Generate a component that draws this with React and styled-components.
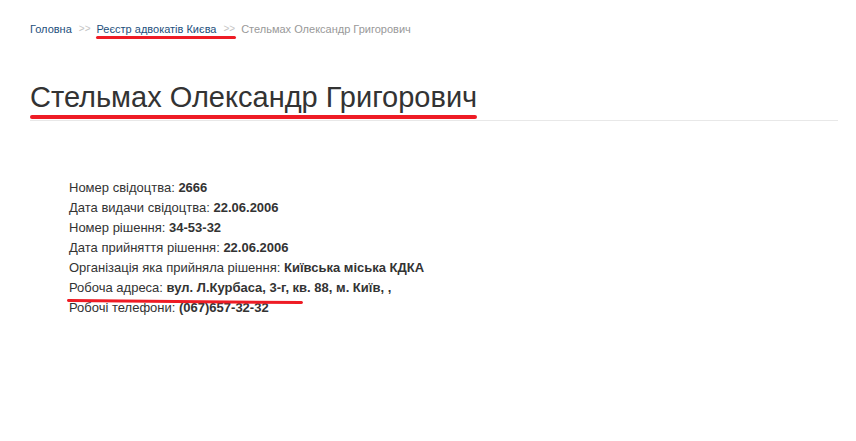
import React from "react";
import styled, { createGlobalStyle } from "styled-components";

const Global = createGlobalStyle`
  html, body { margin: 0; padding: 0; background: #fff; }
  body { font-family: "Liberation Sans", Arial, sans-serif; color: #333; }
`;

const Page = styled.div`
  padding: 22px 18px 0 30px;
`;

const Crumbs = styled.nav`
  display: flex;
  align-items: center;
  font-size: 11px;
  line-height: 14px;
  position: relative;
`;

const Crumb = styled.a`
  color: ${(p) => (p.$current ? "#999" : "#1d4f7c")};
  text-decoration: none;
  position: relative;
`;

const Sep = styled.span`
  color: #c4c4c4;
  margin: 0 6px 0 7px;
  font-size: 10px;
`;

const Marker = styled.span`
  position: absolute;
  height: ${(p) => p.$h || 3}px;
  background: #ee1c25;
  border-radius: 2px;
  left: ${(p) => p.$left}px;
  width: ${(p) => p.$width}px;
  top: ${(p) => p.$top}px;
  transform: rotate(${(p) => p.$rot || 0}deg);
  transform-origin: left center;
`;

const TitleWrap = styled.div`
  margin-top: 42px;
  border-bottom: 1px solid #e8e8e8;
  position: relative;
  padding-bottom: 4px;
`;

const Title = styled.h1`
  margin: 0;
  font-size: 29px;
  font-weight: 400;
  line-height: 38px;
  color: #333;
`;

const Details = styled.div`
  margin-top: 57px;
  padding-left: 39px;
  position: relative;
  font-size: 13px;
  line-height: 20px;
  color: #333;
`;

const Row = styled.div``;

const Val = styled.b`
  font-weight: 700;
`;

const rows = [
  ["Номер свідоцтва", "2666"],
  ["Дата видачи свідоцтва", "22.06.2006"],
  ["Номер рішення", "34-53-32"],
  ["Дата прийняття рішення", "22.06.2006"],
  ["Організація яка прийняла рішення", "Київська міська КДКА"],
  ["Робоча адреса", "вул. Л.Курбаса, 3-г, кв. 88, м. Київ, ,"],
  ["Робочі телефони", "(067)657-32-32"],
];

export default function App() {
  return (
    <>
      <Global />
      <Page>
        <Crumbs>
          <Crumb href="#">Головна</Crumb>
          <Sep>&gt;&gt;</Sep>
          <Crumb href="#">Реєстр адвокатів Києва</Crumb>
          <Sep>&gt;&gt;</Sep>
          <Crumb $current>Стельмах Олександр Григорович</Crumb>
          <Marker $left={66} $width={140} $top={14} />
        </Crumbs>
        <TitleWrap>
          <Title>Стельмах Олександр Григорович</Title>
          <Marker $left={0} $width={447} $top={37} $h={4} />
        </TitleWrap>
        <Details>
          {rows.map(([k, v]) => (
            <Row key={k}>
              {k}: <Val>{v}</Val>
            </Row>
          ))}
          <Marker $left={37} $width={236} $top={121} $rot={0.5} />
        </Details>
      </Page>
    </>
  );
}
